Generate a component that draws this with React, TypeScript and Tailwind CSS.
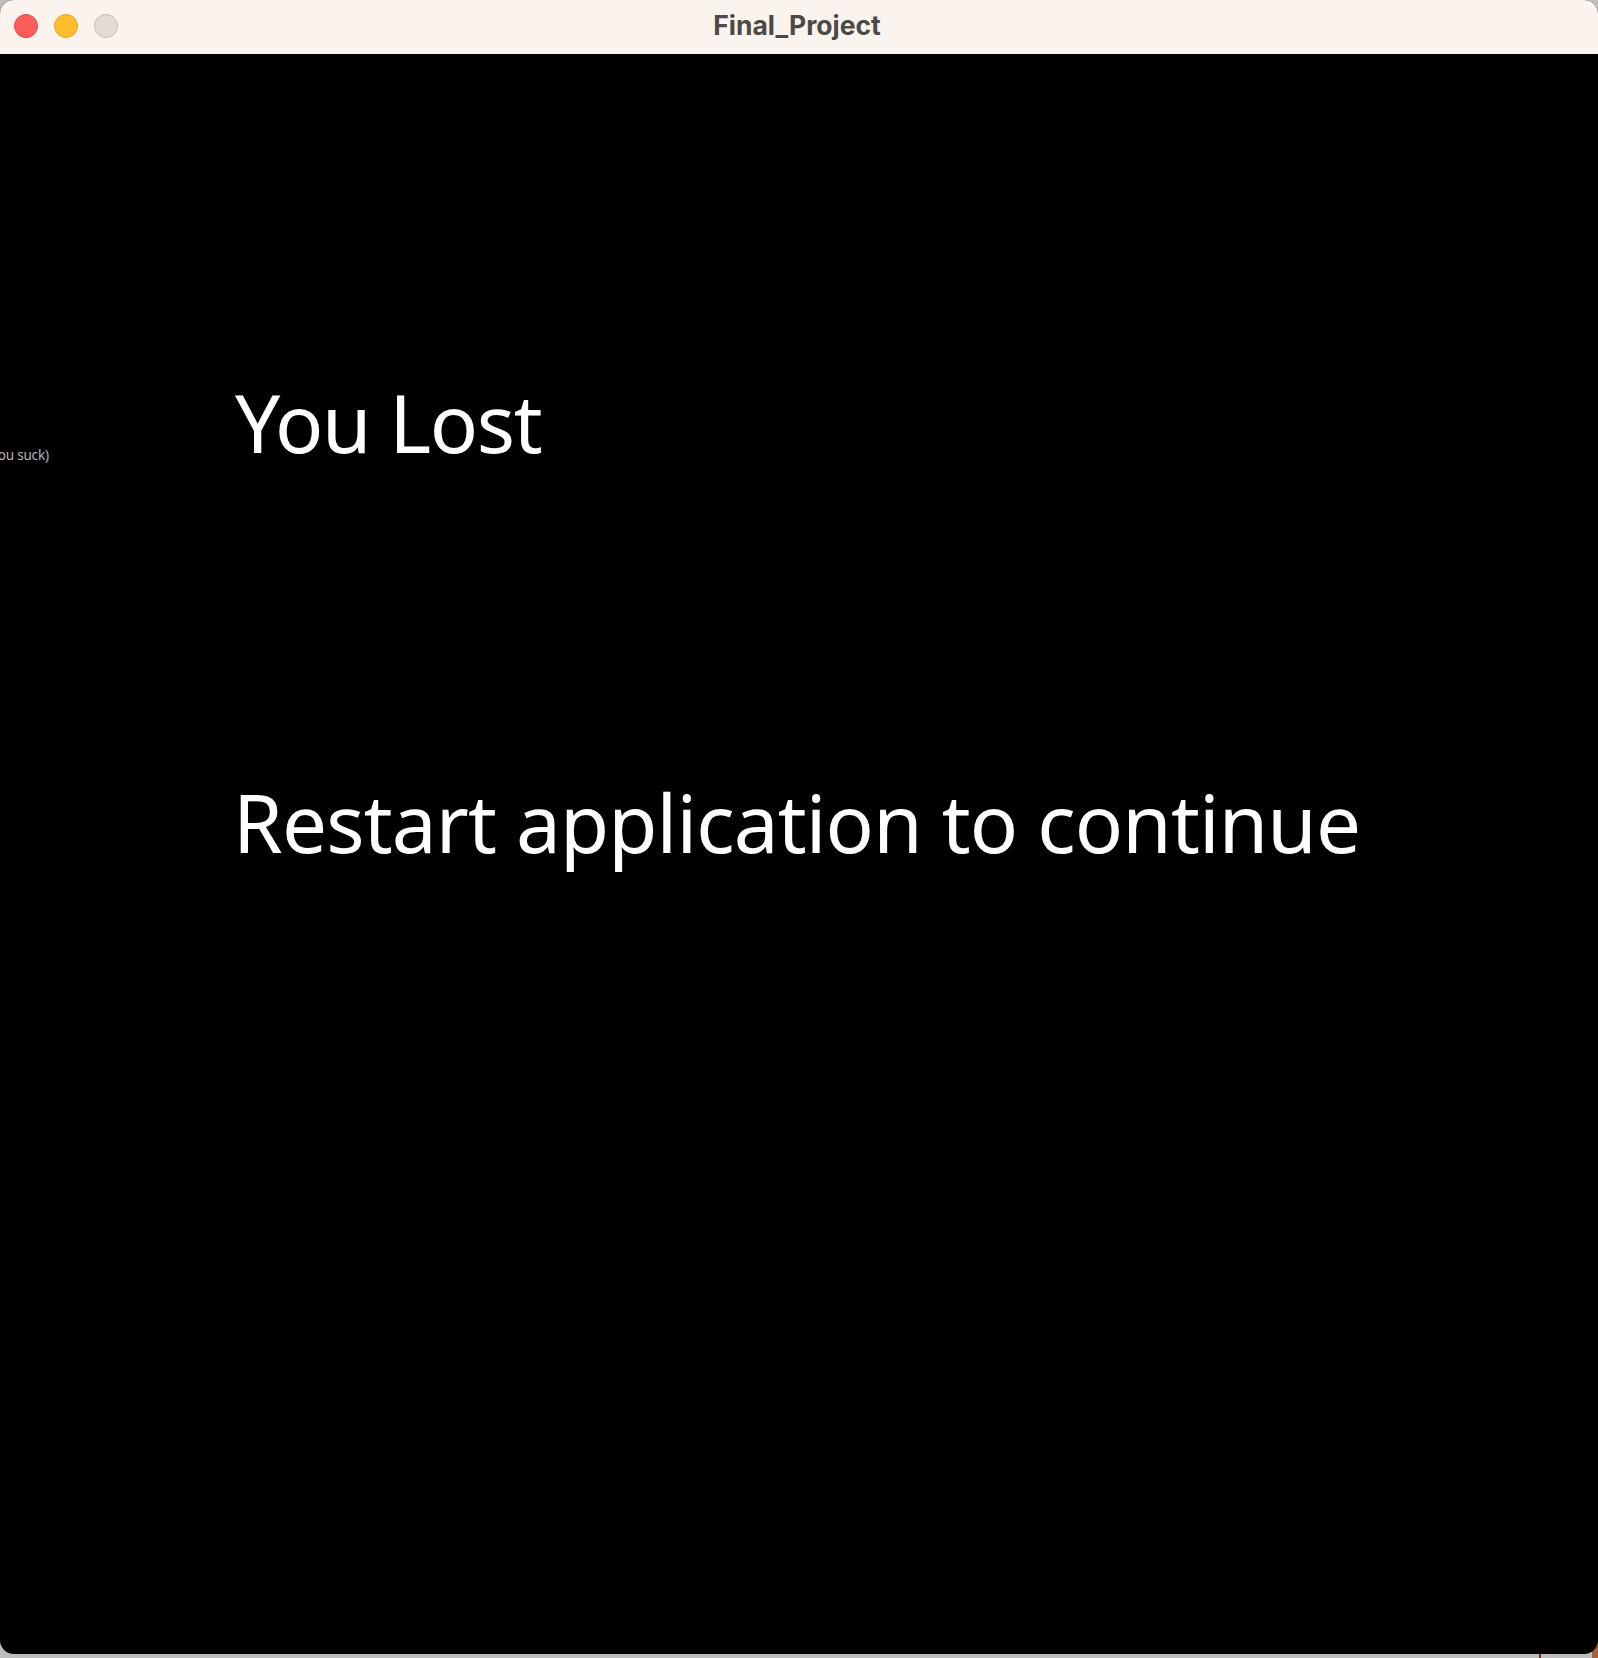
import React from 'react';

const App: React.FC = () => {
  return (
    <div className="relative h-[1658px] w-[1598px] overflow-hidden bg-[#bdbdbd]">
      {/* bits of the desktop showing past the window corner */}
      <div className="absolute bottom-0 right-0 h-[16px] w-[6px] bg-[#a8603a]" />
      <div className="absolute bottom-0 left-[1539px] h-[4px] w-[2px] bg-[#7a2c1c]" />
      <div className="relative flex h-[1654px] flex-col overflow-hidden rounded-[14px] bg-black">
        <div className="relative flex h-[54px] shrink-0 items-center justify-center bg-[#fbf3ee]">
          <div className="absolute left-[14px] top-[14px] flex gap-[16px]">
            <span className="h-[24px] w-[24px] rounded-full border border-[#e5494a] bg-[#ff5c5c]" />
            <span className="h-[24px] w-[24px] rounded-full border border-[#e5a51f] bg-[#ffbd2e]" />
            <span className="h-[24px] w-[24px] rounded-full border border-[#c9c0ba] bg-[#e2dbd6]" />
          </div>
          <span className="mb-[4px] ml-[-4px] font-['Inter',sans-serif] text-[26.5px] font-bold leading-none text-[#4d4947]">Final_Project</span>
        </div>
        <div className="flex-1 overflow-hidden font-['Noto_Sans',sans-serif] text-white">
          <div className="flex items-end pt-[318px]">
            <span className="ml-[-9px] w-[243px] shrink-0 pb-[9px] text-[13.5px] leading-[16px] tracking-[-0.2px] text-[#b5b5b5]">You suck)</span>
            <span className="ml-[1px] text-[80px] leading-[100px] tracking-[-1.4px]">You Lost</span>
          </div>
          <div className="mt-[300px] pl-[233px]">
            <span className="text-[80px] leading-[100px] tracking-[-0.85px]">Restart application to continue</span>
          </div>
        </div>
      </div>
    </div>
  );
};

export default App;
